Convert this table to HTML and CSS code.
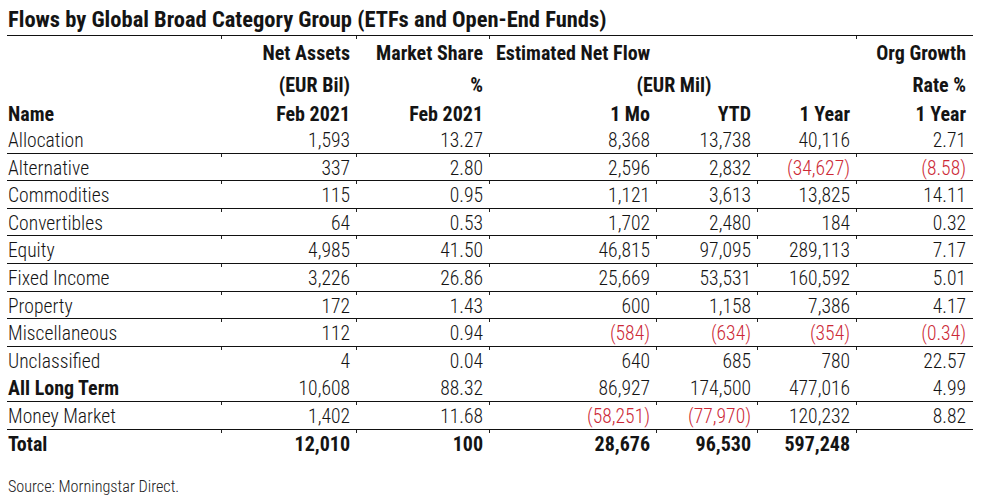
FILE: index.html
```html
<!DOCTYPE html>
<html lang="en">
<head>
<meta charset="utf-8">
<title>Flows by Global Broad Category Group</title>
<link rel="stylesheet" href="styles.css">
</head>
<body>
<div class="report">
  <h1 class="title">Flows by Global Broad Category Group (ETFs and Open-End Funds)</h1>
  <table class="flows">
    <colgroup>
      <col class="c-name"><col class="c-assets"><col class="c-share"><col class="c-mo"><col class="c-ytd"><col class="c-yr"><col class="c-org">
    </colgroup>
    <thead>
      <tr class="h1 ticks">
        <th class="left"></th>
        <th>Net Assets</th>
        <th>Market Share</th>
        <th class="left flow" colspan="3">Estimated Net Flow</th>
        <th>Org Growth</th>
      </tr>
      <tr class="h2">
        <th class="left"></th>
        <th>(EUR Bil)</th>
        <th>%</th>
        <th class="center" colspan="3">(EUR Mil)</th>
        <th>Rate %</th>
      </tr>
      <tr class="h3">
        <th class="left">Name</th>
        <th>Feb 2021</th>
        <th>Feb 2021</th>
        <th>1 Mo</th>
        <th>YTD</th>
        <th>1 Year</th>
        <th>1 Year</th>
      </tr>
    </thead>
    <tbody>
      <tr class="ruled">
        <td class="left">Allocation</td><td>1,593</td><td>13.27</td><td>8,368</td><td>13,738</td><td>40,116</td><td>2.71</td>
      </tr>
      <tr class="ruled ticks">
        <td class="left">Alternative</td><td>337</td><td>2.80</td><td>2,596</td><td>2,832</td><td class="neg">(34,627)</td><td class="neg">(8.58)</td>
      </tr>
      <tr class="ruled ticks">
        <td class="left">Commodities</td><td>115</td><td>0.95</td><td>1,121</td><td>3,613</td><td>13,825</td><td>14.11</td>
      </tr>
      <tr class="ruled ticks">
        <td class="left">Convertibles</td><td>64</td><td>0.53</td><td>1,702</td><td>2,480</td><td>184</td><td>0.32</td>
      </tr>
      <tr class="ruled ticks">
        <td class="left">Equity</td><td>4,985</td><td>41.50</td><td>46,815</td><td>97,095</td><td>289,113</td><td>7.17</td>
      </tr>
      <tr class="ruled ticks">
        <td class="left">Fixed Income</td><td>3,226</td><td>26.86</td><td>25,669</td><td>53,531</td><td>160,592</td><td>5.01</td>
      </tr>
      <tr class="ruled ticks">
        <td class="left">Property</td><td>172</td><td>1.43</td><td>600</td><td>1,158</td><td>7,386</td><td>4.17</td>
      </tr>
      <tr class="ruled ticks">
        <td class="left">Miscellaneous</td><td>112</td><td>0.94</td><td class="neg">(584)</td><td class="neg">(634)</td><td class="neg">(354)</td><td class="neg">(0.34)</td>
      </tr>
      <tr class="ticks">
        <td class="left">Unclassified</td><td>4</td><td>0.04</td><td>640</td><td>685</td><td>780</td><td>22.57</td>
      </tr>
      <tr class="ruled">
        <td class="left strong">All Long Term</td><td>10,608</td><td>88.32</td><td>86,927</td><td>174,500</td><td>477,016</td><td>4.99</td>
      </tr>
      <tr class="ruled ticks">
        <td class="left">Money Market</td><td>1,402</td><td>11.68</td><td class="neg">(58,251)</td><td class="neg">(77,970)</td><td>120,232</td><td>8.82</td>
      </tr>
      <tr class="ticks total">
        <td class="left">Total</td><td>12,010</td><td>100</td><td>28,676</td><td>96,530</td><td>597,248</td><td></td>
      </tr>
    </tbody>
  </table>
  <p class="source">Source: Morningstar Direct.</p>
</div>
</body>
</html>
```

FILE: styles.css
```css
html, body {
  margin: 0;
  padding: 0;
  background: #fff;
}

body {
  font-family: "Roboto Condensed", "Noto Sans", sans-serif;
  font-stretch: condensed;
  color: #141414;
}

.report {
  width: 966px;
  padding-left: 7px;
}

.title {
  margin: 0;
  padding: 6px 0 3px 1px;
  font-size: 22.5px;
  line-height: 26px;
  font-weight: bold;
  border-bottom: 1px solid #111;
}

.flows {
  width: 966px;
  table-layout: fixed;
  border-collapse: separate;
  border-spacing: 0;
  font-size: 19.6px;
}

.c-name { width: 215px; }
.c-assets { width: 135px; }
.c-share { width: 133px; }
.c-mo { width: 167px; }
.c-ytd { width: 101px; }
.c-yr { width: 99px; }
.c-org { width: 116px; }

.flows th,
.flows td {
  padding: 0 7px 0 1px;
  text-align: right;
  white-space: nowrap;
  vertical-align: top;
}

.flows th {
  font-size: 20px;
  font-weight: bold;
  line-height: 24px;
  padding-top: 4.7px;
  padding-bottom: 1.3px;
}

.flows .h1 th { padding-bottom: 2.3px; }
.flows .h2 th { padding-top: 6.2px; padding-bottom: 0.3px; }
.flows .h3 th { padding-top: 5.5px; padding-bottom: 0; line-height: 23px; }

.flows td {
  font-weight: 300;
  line-height: 23.6px;
  padding-top: 3px;
  border-bottom: 1px solid transparent;
}

.flows .ruled td {
  border-bottom-color: #111;
}

.flows .left { text-align: left; }
.flows .center { text-align: center; padding-right: 0; }
.flows .flow { padding-left: 6px; }

.ticks > th:not(:last-child),
.ticks > td:not(:last-child) {
  background: linear-gradient(#222, #222) no-repeat right top / 1px 3px;
}

.flows .strong,
.flows .total td {
  font-weight: bold;
  font-size: 20px;
}

.neg {
  color: #cc2936;
}

.source {
  margin: 20px 0 0 1px;
  font-size: 16.2px;
  font-weight: 300;
  line-height: 20px;
  color: #222;
}
```
